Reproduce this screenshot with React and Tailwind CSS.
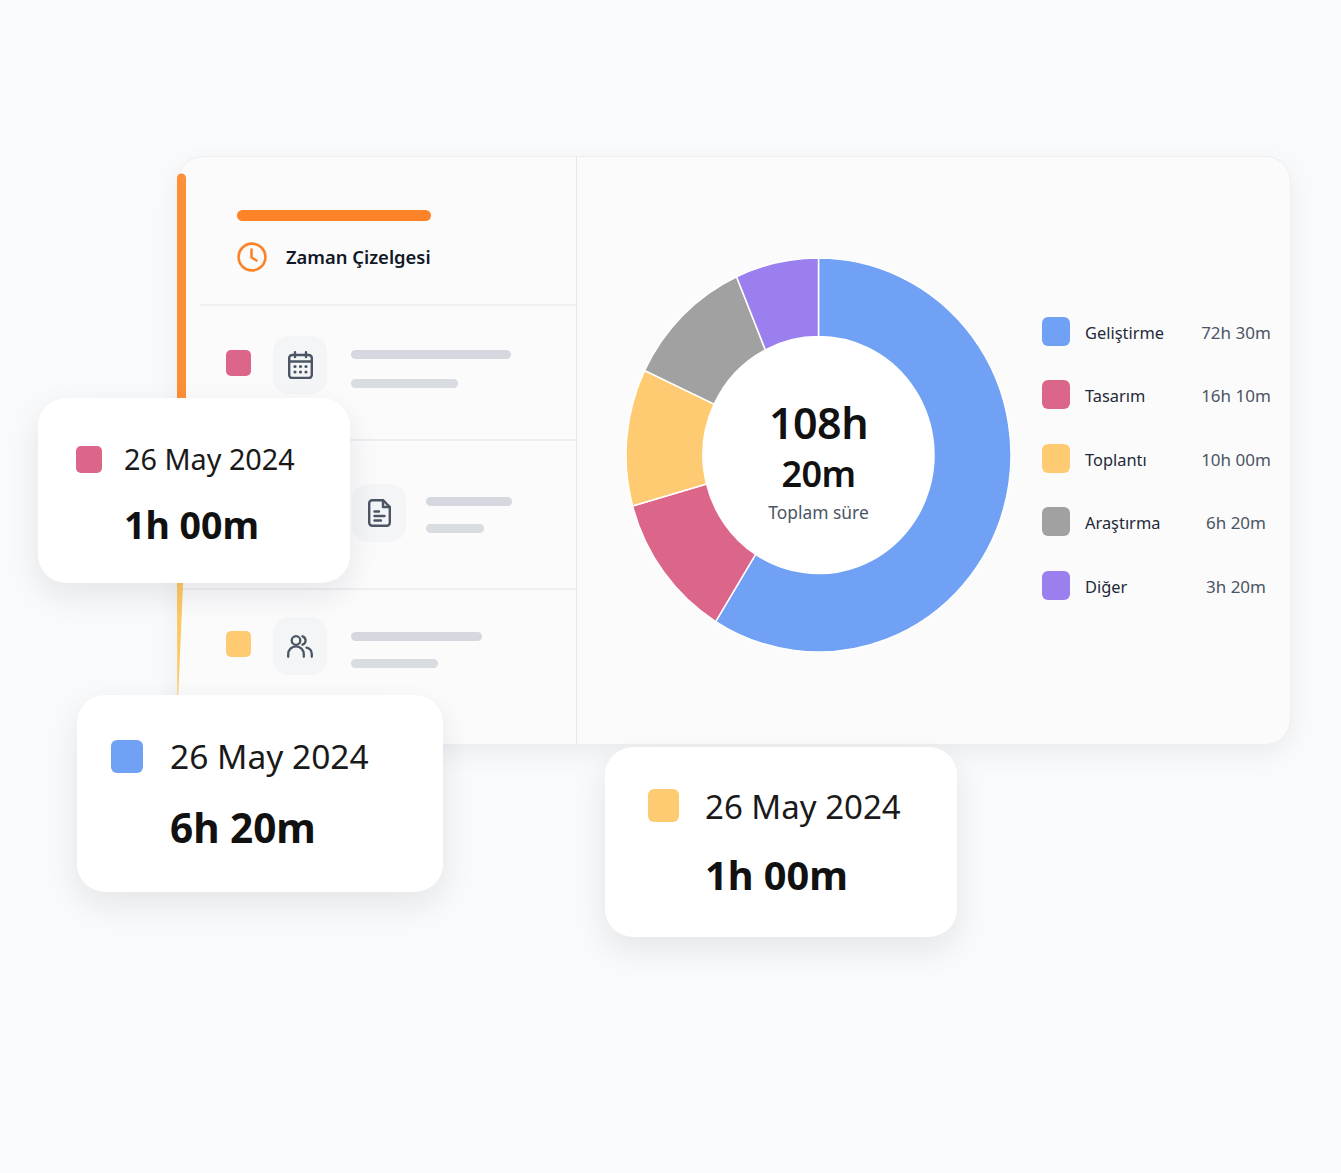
const FONT = { fontFamily: '"Noto Sans", "Open Sans", sans-serif' };

const CX = 192.5;
const CY = 197;
const OX = 192.5;
const OY = 197;
const IX = 115.5;
const IY = 118.5;

function pt(a, rx, ry) {
  const r = (a * Math.PI) / 180;
  return `${(CX + rx * Math.sin(r)).toFixed(2)} ${(CY - ry * Math.cos(r)).toFixed(2)}`;
}

function seg(a0, a1, b0, b1) {
  const large = a1 - a0 > 180 ? 1 : 0;
  return `M${pt(a0, OX, OY)}A${OX} ${OY} 0 ${large} 1 ${pt(a1, OX, OY)}L${pt(b1, IX, IY)}A${IX} ${IY} 0 ${large} 0 ${pt(b0, IX, IY)}Z`;
}

const SLICES = [
  { c: '#70a1f5', d: seg(0, 212.3, 0, 213) },
  { c: '#dc6689', d: seg(212.3, 255, 213, 255.8) },
  { c: '#fecb72', d: seg(255, 295.4, 255.8, 295.4) },
  { c: '#a1a1a1', d: seg(295.4, 334.8, 295.4, 332.6) },
  { c: '#9b7fee', d: seg(334.8, 360, 332.6, 360) },
];

const LEGEND = [
  ['Geliştirme', '72h 30m', 'bg-[#70a1f5]'],
  ['Tasarım', '16h 10m', 'bg-[#dc6689]'],
  ['Toplantı', '10h 00m', 'bg-[#fecb72]'],
  ['Araştırma', '6h 20m', 'bg-[#a1a1a1]'],
  ['Diğer', '3h 20m', 'bg-[#9b7fee]'],
];

function CalendarIcon() {
  return (
    <svg width="25" height="28" viewBox="0 0 25 28" fill="none" stroke="#4b5563" strokeWidth="2.4" strokeLinecap="round">
      <rect x="1.2" y="4" width="22.6" height="23" rx="3" />
      <path d="M1.2 10.5H23.8M7 1.2V6M18 1.2V6" />
      <g fill="#4b5563" stroke="none">
        <circle cx="7" cy="15.5" r="1.6" />
        <circle cx="12.5" cy="15.5" r="1.6" />
        <circle cx="18" cy="15.5" r="1.6" />
        <circle cx="7" cy="21" r="1.6" />
        <circle cx="12.5" cy="21" r="1.6" />
        <circle cx="18" cy="21" r="1.6" />
      </g>
    </svg>
  );
}

function FileIcon() {
  return (
    <svg width="23" height="28" viewBox="0 0 23 28" fill="none" stroke="#4b5563" strokeWidth="2.4" strokeLinecap="round" strokeLinejoin="round">
      <path d="M15 1.2H4.2a3 3 0 0 0-3 3v19.6a3 3 0 0 0 3 3h14.6a3 3 0 0 0 3-3V8Z" />
      <path d="M15 1.2V8h6.8" />
      <path d="M6.5 12.5h4.5M6.5 17h10M6.5 21.5h6.5" />
    </svg>
  );
}

function UsersIcon() {
  return (
    <svg width="26" height="23" viewBox="0 0 26 23" fill="none" stroke="#4b5563" strokeWidth="2.3" strokeLinecap="round">
      <circle cx="9" cy="5.5" r="4.3" />
      <path d="M15.5 1.3a4.4 4.4 0 0 1 0 8.4" />
      <path d="M1.2 21.8v-2.6a7.8 7.8 0 0 1 15.6 0v2.6" />
      <path d="M19.5 12.6a6.8 6.8 0 0 1 5.3 6.6v2.6" />
    </svg>
  );
}

function ClockIcon() {
  return (
    <svg width="30" height="30" viewBox="0 0 30 30" fill="none" stroke="#fb8428" strokeWidth="2.6" strokeLinecap="round" strokeLinejoin="round">
      <circle cx="15" cy="15" r="13.4" />
      <path d="M14.5 7.5V15.5L19.5 18.5" />
    </svg>
  );
}

function Tile({ children }) {
  return (
    <div className="flex h-[58px] w-[54px] shrink-0 items-center justify-center rounded-2xl bg-[#f4f5f7]">
      {children}
    </div>
  );
}

function Lines({ a, b, gap }) {
  return (
    <div className={`flex flex-col ${gap}`}>
      <div className={`h-[9px] rounded-full bg-[#d5d8de] ${a}`} />
      <div className={`h-[9px] rounded-full bg-[#d9dce1] ${b}`} />
    </div>
  );
}

export default function App() {
  return (
    <div style={FONT} className="relative h-[1173px] w-full overflow-hidden bg-[#f9fafb] pl-[177px] pr-[50px] pt-[156px] text-[#111827]">
      <div className="flex h-[589px] rounded-[26px] border border-[#eceef0] bg-[#fbfbfc] shadow-[0_8px_26px_rgba(17,24,39,0.06)]">
        <div className="w-[399px] shrink-0 border-r border-[#e5e7eb]">
          <div className="ml-[22px] h-[149px] border-b-2 border-[#eeeff2] pl-[37px] pt-[53px]">
            <div className="h-[11px] w-[194px] rounded-full bg-[#fd8328]" />
            <div className="mt-[21px] flex items-center gap-[19px]">
              <ClockIcon />
              <span className="text-[18.4px] font-semibold leading-[30px] text-[#111827]">Zaman Çizelgesi</span>
            </div>
          </div>
          <div className="flex h-[135px] items-start border-b-2 border-[#eeeff2] pl-[48px] pt-[30px]">
            <div className="mt-[14px] h-[26px] w-[25px] rounded-[5px] bg-[#dc6689]" />
            <div className="ml-[22px]"><Tile><CalendarIcon /></Tile></div>
            <div className="ml-[24px] mt-[14px]"><Lines a="w-[160px]" b="w-[107px]" gap="gap-[20px]" /></div>
          </div>
          <div className="flex h-[149px] items-start border-b-2 border-[#eeeff2] pl-[174px] pt-[43px]">
            <Tile><FileIcon /></Tile>
            <div className="ml-[20px] mt-[13px]"><Lines a="w-[86px]" b="w-[58px]" gap="gap-[18px]" /></div>
          </div>
          <div className="flex items-start pl-[48px] pt-[27px]">
            <div className="mt-[14px] h-[26px] w-[25px] rounded-[5px] bg-[#fecb72]" />
            <div className="ml-[22px]"><Tile><UsersIcon /></Tile></div>
            <div className="ml-[24px] mt-[15px]"><Lines a="w-[131px]" b="w-[87px]" gap="gap-[18px]" /></div>
          </div>
        </div>

        <div className="flex flex-1 items-start pl-[49px] pt-[101px]">
          <div className="relative h-[394px] w-[385px] shrink-0">
            <svg width="385" height="394" viewBox="0 0 385 394">
              {SLICES.map((s) => (
                <path key={s.c} d={s.d} fill={s.c} stroke="#ffffff" strokeWidth="1.5" strokeLinejoin="round" />
              ))}
              <ellipse cx={CX} cy={CY} rx={IX - 0.5} ry={IY - 0.5} fill="#ffffff" />
            </svg>
            <div className="absolute inset-0 flex flex-col items-center pt-[138px]">
              <div className="text-[43px] font-semibold leading-[53px] tracking-[-0.5px] text-[#111111]">108h</div>
              <div className="text-[36px] font-semibold leading-[50px] tracking-[-0.5px] text-[#111111]">20m</div>
              <div className="text-[17.4px] leading-[26px] text-[#4b5563]">Toplam süre</div>
            </div>
          </div>

          <div className="ml-[31px] mt-[59px] flex flex-col gap-[34.4px]">
            {LEGEND.map(([name, value, color]) => (
              <div key={name} className="flex h-[29px] items-center">
                <div className={`h-[29px] w-[28px] shrink-0 rounded-[6px] ${color}`} />
                <div className="ml-[15px] mt-[2px] w-[116px] text-[16.4px] leading-[29px] text-[#1f2937]">{name}</div>
                <div className="mt-[2px] w-[70px] whitespace-nowrap text-center text-[17px] leading-[29px] text-[#4b5563]">{value}</div>
              </div>
            ))}
          </div>
        </div>
      </div>

      <svg className="absolute left-[177px] top-[172px]" width="10" height="525" viewBox="0 0 10 525">
        <defs>
          <linearGradient id="bar" x1="0" y1="0" x2="0" y2="1">
            <stop offset="0.45" stopColor="#fd8f37" />
            <stop offset="0.7" stopColor="#fdc763" />
          </linearGradient>
        </defs>
        <path d="M0 6A4.5 4.5 0 0 1 9 6V344L1.2 524H0.4L0 411Z" fill="url(#bar)" />
      </svg>

      <div className="absolute left-[38px] top-[398px] z-10 h-[185px] w-[312px] rounded-[28px] bg-white pl-[38px] pt-[40px] shadow-[0_12px_32px_rgba(17,24,39,0.09)]">
        <div className="flex items-center gap-[22px]">
          <div className="h-[27px] w-[26px] shrink-0 rounded-[5px] bg-[#dc6689]" />
          <span className="whitespace-nowrap text-[28.8px] leading-[42px] text-[#1a1a1a]">26 May 2024</span>
        </div>
        <div className="ml-[48px] mt-[23px] whitespace-nowrap text-[37.5px] font-bold leading-[44px] text-[#111111]">1h 00m</div>
      </div>

      <div className="absolute left-[77px] top-[695px] z-10 h-[197px] w-[366px] rounded-[28px] bg-white pl-[34px] pt-[37px] shadow-[0_12px_32px_rgba(17,24,39,0.09)]">
        <div className="flex items-center gap-[27px]">
          <div className="h-[33px] w-[32px] shrink-0 rounded-[6px] bg-[#70a1f5]" />
          <span className="whitespace-nowrap text-[33.5px] leading-[48px] text-[#1a1a1a]">26 May 2024</span>
        </div>
        <div className="ml-[59px] mt-[24px] whitespace-nowrap text-[40.5px] font-bold leading-[48px] text-[#111111]">6h 20m</div>
      </div>

      <div className="absolute left-[605px] top-[747px] z-10 h-[190px] w-[352px] rounded-[28px] bg-white pl-[43px] pt-[36px] shadow-[0_12px_32px_rgba(17,24,39,0.09)]">
        <div className="flex items-center gap-[26px]">
          <div className="mb-[3px] h-[33px] w-[31px] shrink-0 rounded-[6px] bg-[#fecb72]" />
          <span className="whitespace-nowrap text-[33px] leading-[48px] text-[#1a1a1a]">26 May 2024</span>
        </div>
        <div className="ml-[57px] mt-[21px] whitespace-nowrap text-[39.7px] font-bold leading-[46px] text-[#111111]">1h 00m</div>
      </div>
    </div>
  );
}
